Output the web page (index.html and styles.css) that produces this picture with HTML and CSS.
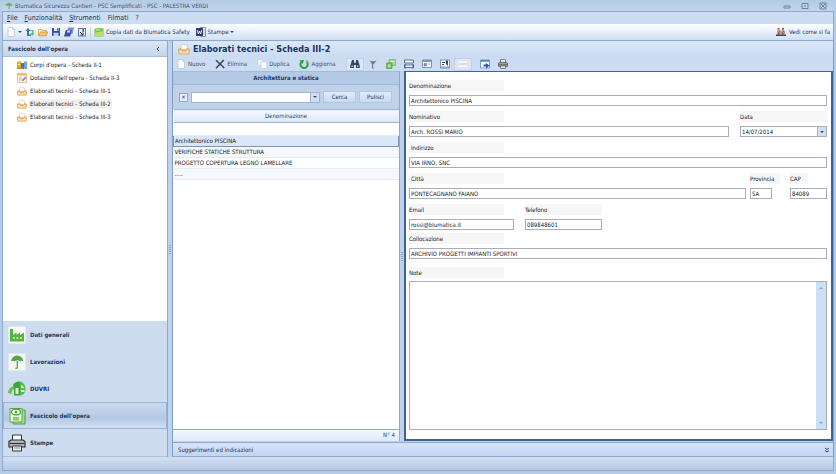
FILE: index.html
```
<!DOCTYPE html>
<html lang="it">

<head>
    <meta charset="UTF-8">
    <title>Blumatica Sicurezza Cantieri</title>
    <link rel="stylesheet" href="styles.css">
</head>

<body>

    <svg class="sprite">
        <symbol id="i-doc" viewBox="0 0 10 10"><path d="M2 .5h4.500l2 2V9.500H2z" fill="#fff" stroke="#b9c6d8" stroke-width=".8"/><path d="M6.500.5v2h2" fill="none" stroke="#b9c6d8" stroke-width=".8"/></symbol>
        <symbol id="i-sync" viewBox="0 0 10 10"><path d="M.5 4L3 1l2.500 3H4v3.500h2V9H2V4z" fill="#2f7f8c"/><path d="M5 6l2.500 3L9.500 6H8.500V3H5v1h2v2z" fill="#63b3a0"/></symbol>
        <symbol id="i-folder" viewBox="0 0 10 10"><path d="M.5 8.500v-6h3l1 1h4v1.500" fill="#fff0c8" stroke="#dd9a3c" stroke-width=".8"/><path d="M.5 8.800L2.500 5h7.300L8 8.800z" fill="#fbc86c" stroke="#dd8f2c" stroke-width=".8"/></symbol>
        <symbol id="i-save" viewBox="0 0 10 10"><path d="M1 1h8v8H1z" fill="#3b4ea8"/><path d="M3 1h4.500v3H3z" fill="#e6ebfa"/><path d="M2.500 5.800h5V9h-5z" fill="#c3cdec"/><path d="M6 1.500h1v2H6z" fill="#3b4ea8"/></symbol>
        <symbol id="i-saveall" viewBox="0 0 10 10"><path d="M4 .5h6L8.500 7h-6z" fill="#7d8fd2"/><path d="M1.800 3h6L6.200 9.500H0z" fill="#3b4ea8"/><path d="M3.500 3.500h2.800L5.800 5.500H3z" fill="#dfe6fa"/></symbol>
        <symbol id="i-saveas" viewBox="0 0 10 10"><path d="M1 1h8v8.500H1z" fill="#6a759c"/><path d="M2 2h6v6.500H2z" fill="#e8edf6"/><path d="M5.500 2h1.500v3H5.500z" fill="#4a5580"/><path d="M3 5l3 3M6 5.500V8H3.500" stroke="#26315e" fill="none"/></symbol>
        <symbol id="i-pack" viewBox="0 0 10 10"><path d="M.5 2l3.500-1 5.500.6V9.500h-9z" fill="#7cc142"/><path d="M1.500 5.500l8-1.500v5.500h-9z" fill="#b4e070"/><path d="M2 2.500h4v1H2z" fill="#dff3b8"/></symbol>
        <symbol id="i-word" viewBox="0 0 10 10"><path d="M4.500.5h5v9h-5z" fill="#fff" stroke="#66749b" stroke-width=".8"/><path d="M6.500 3H9M6.500 5H9M6.500 7H9" stroke="#8b97b8" stroke-width=".8"/><path d="M0 1h7v8H0z" fill="#2e3a78"/><path d="M1.200 3l1.200 4L3.500 4l1.100 3L5.800 3" fill="none" stroke="#fff" stroke-width=".9"/></symbol>
        <symbol id="i-help" viewBox="0 0 10 10"><path d="M1.500 1h2v1.800h-2zM6 1h2v1.800H6z" fill="#c0503e"/><path d="M1.500 3.500h3v4h-3zM5.500 3.500h3v4h-3z" fill="#8b4a42"/><path d="M0 7.500h10V9H0z" fill="#3f4152"/><path d="M2.500 4l1 2.500M6.500 4l1 2.500" stroke="#e9ded8" stroke-width=".7"/></symbol>
        <symbol id="i-works" viewBox="0 0 10 10"><path d="M0 2l2.500-1L4 2v7H0z" fill="#f3a825"/><path d="M4 3h3v6H4z" fill="#3b73b9"/><path d="M7 1.500h3V9H7z" fill="#6aa8dc"/><path d="M1 4h2v1H1z" fill="#fff0bf"/><path d="M0 7.500h6V9H0z" fill="#d9821a"/></symbol>
        <symbol id="i-equip" viewBox="0 0 10 10"><path d="M.5.5h9v9h-9z" fill="#f8f4ea" stroke="#e6b276" stroke-width=".8"/><path d="M.5.5h9v2h-9z" fill="#f2b56b"/><path d="M2 5h2M2 7h1.500" stroke="#d98a3a"/><path d="M4.500 7L8.500 3.500l1 1.500-3.500 3.500z" fill="#6a9ad0"/></symbol>
        <symbol id="i-tray" viewBox="0 0 12 12"><path d="M2.500 6l1.500-5 5.500 1.500L9 7z" fill="#fff" stroke="#c9c2b4" stroke-width=".7"/><path d="M.5 6l2.500-1.500v2h5.800V4.500L11.500 6 11 11H1z" fill="#f3b163"/><path d="M.5 6.200h3l1 1.800h3l1-1.800h3L11 11H1z" fill="#fbdcae" stroke="#cf9450" stroke-width=".7"/></symbol>
        <symbol id="i-cross" viewBox="0 0 10 10"><path d="M1 1.200L9.300 9M8.800 1L1 9.200" stroke="#3a4657" stroke-width="1.500" fill="none"/></symbol>
        <symbol id="i-copy" viewBox="0 0 10 10"><path d="M.5.5h5v6h-5z" fill="#f1f4fa" stroke="#c3cfdf" stroke-width=".7"/><path d="M4 3h5.500v6.500H4z" fill="#fff" stroke="#c3cfdf" stroke-width=".7"/></symbol>
        <symbol id="i-refresh" viewBox="0 0 10 10"><path d="M2 3.500a3.600 3.600 0 1 0 6.200.2" fill="none" stroke="#31a03c" stroke-width="2"/><path d="M.5 1.500L5 1 3.500 5z" fill="#2c9537"/><path d="M6.500 3.800L10 3.500 8 .8z" fill="#56bd56"/></symbol>
        <symbol id="i-find" viewBox="0 0 10 10"><path d="M2 1h2v2l.6 1h.8L6 3V1h2l1.800 6v2H6V6H4v3H.2V7z" fill="#33486e"/><path d="M1.500 6.500h1.500v1.500H1.500zM7 6.500h1.500v1.500H7z" fill="#a9bbd8"/></symbol>
        <symbol id="i-funnel" viewBox="0 0 10 10"><path d="M1.500 1.500h7L6 5v4.500H4V5z" fill="#767b83"/><path d="M2.500 1h5v1.200h-5z" fill="#d3d8df"/><path d="M5 5h.8v4H5z" fill="#dfe3e8"/></symbol>
        <symbol id="i-sheets" viewBox="0 0 10 10"><path d="M3 .5h6.500v6H3z" fill="#a5d88e" stroke="#6cb35c" stroke-width=".7"/><path d="M.5 4h5.500v5.500H.5z" fill="#6fbe55" stroke="#55a047" stroke-width=".7"/><path d="M5 2.500h3.500M2 6h2.500M2 7.800h2.500" stroke="#fff" stroke-width=".8"/></symbol>
        <symbol id="i-split" viewBox="0 0 10 10"><path d="M.5 1h9v3h-9zM.5 6h9v2.500h-9z" fill="#fff" stroke="#5c6e92"/><path d="M1 9.500V5M9 9.500V5" stroke="#46587c"/></symbol>
        <symbol id="i-card" viewBox="0 0 10 10"><path d="M.5 1h9v7.500h-9z" fill="#fff" stroke="#6b7c9d" stroke-width=".8"/><path d="M1 1h8v2H1z" fill="#8496b5"/><path d="M2 4.500h2.500V7H2zM5.500 5H8.500" fill="#7b8bab" stroke="#7b8bab" stroke-width=".7"/></symbol>
        <symbol id="i-column" viewBox="0 0 10 10"><path d="M.5 1h9v8h-9z" fill="#fff" stroke="#6b7c9d" stroke-width=".8"/><path d="M6 1.500h2V7L6 5zM2 3h3v1H2zM2 5h2v1H2z" fill="#33486e"/><path d="M1 7.500h8v1H1z" fill="#7b8bab"/></symbol>
        <symbol id="i-rows" viewBox="0 0 10 10"><path d="M.5 1.500h9v7h-9z" fill="#f5f5f6" stroke="#dcdfe6" stroke-width=".7"/><path d="M1 5h8" stroke="#c3c6d0"/></symbol>
        <symbol id="i-export" viewBox="0 0 10 10"><path d="M.5 1h9v8h-9z" fill="#fff" stroke="#5c86c8" stroke-width=".8"/><path d="M.5 1h9v1.800h-9z" fill="#5c86c8"/><path d="M3.500 5.500H6V4l3.500 2.500L6 9.500V7.500H3.500z" fill="#2854a8"/></symbol>
        <symbol id="i-print" viewBox="0 0 18 18"><path d="M4.500 1h9v6h-9z" fill="#fff" stroke="#333" stroke-width="1"/><path d="M1 7.500L3 6h12l2 1.500V13H1z" fill="#b8bcc2" stroke="#2c2c2c" stroke-width="1.200"/><path d="M2 9.500h14" stroke="#333" stroke-width="1.200"/><path d="M4.500 12h9v5h-9z" fill="#eef0f2" stroke="#333"/><path d="M6 14h6" stroke="#888"/></symbol>
        <symbol id="i-factory" viewBox="0 0 18 18"><path d="M.5.5h17v17H.5z" fill="#f6fbf4"/><path d="M2 15.500V3h3v6l3.500-2.500V9L12 6.500V9l4-2.500v9z" fill="#56b43c"/><path d="M5 11h1.800v2H5zM8.500 11h1.800v2H8.500zM12 11h1.800v2H12z" fill="#c9eab8"/></symbol>
        <symbol id="i-umbrella" viewBox="0 0 18 18"><path d="M.5.5h17v17H.5z" fill="#f2f7f0"/><path d="M3 8.500C3.500 4.500 6.500 2.500 9 2.500s6 2 6.500 6c-1-1-2.300-1-3.200 0-1-1.200-5-1.200-6 0-1-1-2.300-1-3.300 0z" fill="#55a64a"/><path d="M9.300 8v6.500q-.3 1.500-2 .5" fill="none" stroke="#55a64a" stroke-width="1.300"/></symbol>
        <symbol id="i-duvri" viewBox="0 0 18 18"><path d="M0 13C.5 8 4 5.500 8 6l-.5 3C5 9 3.500 10.500 3.500 14z" fill="#6cbc5c"/><path d="M5 5c1-2.500 4-4 7-3.500v14H6V8z" fill="#3ea537"/><path d="M12 1.500c3.500.5 5.500 4 5.500 7.500s-2 6-5.500 6.500z" fill="#5cb850"/><path d="M7.500 8h3v6h-3zM13 5l3 2v1h-3zM13 10h3.500v2H13z" fill="#d5eecd"/></symbol>
        <symbol id="i-dossier" viewBox="0 0 18 18"><path d="M5 3h12v14H5z" fill="#a9d98e" stroke="#4e9f3c"/><path d="M2 1.500h12V15H2z" fill="#e5f6da" stroke="#55ad40"/><ellipse cx="8" cy="5" rx="4.500" ry="2.800" fill="#fff" stroke="#3f9a30" stroke-width="1.200"/><circle cx="8" cy="5" r="1.300" fill="#3f9a30"/><path d="M5 10h6v3.500H5z" fill="#8bc973"/></symbol>
    </svg>

    <div class="window">
        <header class="titlebar">
            <svg class="logo" viewBox="0 0 10 10"><path d="M1 5C1 2 3 1 5 1s4 1 4 4z" fill="#6fb765"/><path d="M5 5v4" stroke="#7da07b" stroke-width="1.200"/></svg>
            <span class="title">Blumatica Sicurezza Cantieri - PSC Semplificati - PSC - PALESTRA VERDI</span>
            <div class="win-buttons">
                <button aria-label="Riduci"><svg viewBox="0 0 8 8"><path d="M1 4h6v2H1z"/></svg></button>
                <button aria-label="Ripristina"><svg viewBox="0 0 8 8"><path d="M1 1.500h6v5H1zM3 4h2"/></svg></button>
                <button aria-label="Chiudi"><svg viewBox="0 0 8 8"><path d="M1 1h6v6H1zM2 2l4 4M6 2L2 6"/></svg></button>
            </div>
        </header>

        <nav class="menubar">
            <a href="#"><u>F</u>ile</a>
            <a href="#"><u>F</u>unzionalità</a>
            <a href="#"><u>S</u>trumenti</a>
            <a href="#">Filmati</a>
            <a href="#">?</a>
        </nav>

        <div class="toolbar">
            <button aria-label="Nuovo"><svg><use href="#i-doc"/></svg><i class="caret"></i></button>
            <button aria-label="Sincronizza"><svg><use href="#i-sync"/></svg></button>
            <button aria-label="Apri"><svg><use href="#i-folder"/></svg></button>
            <button aria-label="Salva"><svg><use href="#i-save"/></svg></button>
            <button aria-label="Salva tutto"><svg><use href="#i-saveall"/></svg></button>
            <button aria-label="Salva con nome"><svg><use href="#i-saveas"/></svg></button>
            <i class="sep"></i>
            <button><svg><use href="#i-pack"/></svg>Copia dati da Blumatica Safety</button>
            <button class="print"><svg><use href="#i-word"/></svg>Stampe<i class="caret"></i></button>
            <button class="push"><svg><use href="#i-help"/></svg>Vedi come si fa</button>
        </div>

        <div class="workspace">
            <aside class="sidebar">
                <div class="side-head">Fascicolo dell'opera <button class="collapse" aria-label="Comprimi"><svg viewBox="0 0 6 6"><path d="M4 1L2 3l2 2"/></svg></button></div>
                <div class="tree">
                    <a href="#"><svg><use href="#i-works"/></svg><span>Corpi d'opera - Scheda II-1</span></a>
                    <a href="#"><svg><use href="#i-equip"/></svg><span>Dotazioni dell'opera - Scheda II-3</span></a>
                    <a href="#"><svg><use href="#i-tray"/></svg><span>Elaborati tecnici - Scheda III-1</span></a>
                    <a href="#" class="current"><svg><use href="#i-tray"/></svg><span>Elaborati tecnici - Scheda III-2</span></a>
                    <a href="#"><svg><use href="#i-tray"/></svg><span>Elaborati tecnici - Scheda III-3</span></a>
                </div>
                <nav class="sections">
                    <a href="#"><svg><use href="#i-factory"/></svg>Dati generali</a>
                    <a href="#"><svg><use href="#i-umbrella"/></svg>Lavorazioni</a>
                    <a href="#"><svg><use href="#i-duvri"/></svg>DUVRI</a>
                    <a href="#" class="active"><svg><use href="#i-dossier"/></svg>Fascicolo dell'opera</a>
                    <a href="#"><svg><use href="#i-print"/></svg>Stampe</a>
                </nav>
            </aside>
            <div class="splitter"></div>

            <main class="main">
                <h1><svg><use href="#i-tray"/></svg>Elaborati tecnici - Scheda III-2</h1>
                <div class="actions">
                    <button><svg><use href="#i-doc"/></svg>Nuovo</button>
                    <button><svg><use href="#i-cross"/></svg>Elimina</button>
                    <button><svg><use href="#i-copy"/></svg>Duplica</button>
                    <button><svg><use href="#i-refresh"/></svg>Aggiorna</button>
                    <div class="tools">
                        <button class="on" aria-label="Cerca"><svg><use href="#i-find"/></svg></button>
                        <button aria-label="Filtro"><svg><use href="#i-funnel"/></svg></button>
                        <button aria-label="Gruppi"><svg><use href="#i-sheets"/></svg></button>
                        <button aria-label="Dividi"><svg><use href="#i-split"/></svg></button>
                        <button aria-label="Scheda"><svg><use href="#i-card"/></svg></button>
                        <button aria-label="Colonne"><svg><use href="#i-column"/></svg></button>
                        <button class="on" aria-label="Righe"><svg><use href="#i-rows"/></svg></button>
                    </div>
                    <div class="tools">
                        <button aria-label="Esporta"><svg><use href="#i-export"/></svg></button>
                        <button aria-label="Stampa"><svg><use href="#i-print"/></svg></button>
                    </div>
                </div>

                <div class="content">
                    <section class="list">
                        <h2>Architettura e statica</h2>
                        <div class="search">
                            <button class="clear" aria-label="Azzera">×</button>
                            <div class="combo">
                                <input type="text" aria-label="Testo da cercare">
                                <button class="drop" aria-label="Mostra elenco"><i class="caret"></i></button>
                            </div>
                            <button class="btn">Cerca</button>
                            <button class="btn">Pulisci</button>
                        </div>
                        <div class="grid">
                            <table>
                                <thead>
                                    <tr><th>Denominazione</th></tr>
                                </thead>
                                <tbody>
                                    <tr class="filter"><td></td></tr>
                                    <tr class="selected"><td>Architettonico PISCINA</td></tr>
                                    <tr><td>VERIFICHE STATICHE STRUTTURA</td></tr>
                                    <tr><td>PROGETTO COPERTURA LEGNO LAMELLARE</td></tr>
                                    <tr><td>.....</td></tr>
                                </tbody>
                            </table>
                        </div>
                        <div class="count">N° 4</div>
                    </section>
                    <div class="splitter"></div>

                    <form class="detail">
                        <div class="row">
                            <div class="field grow"><label for="denominazione">Denominazione</label><input id="denominazione" type="text" value="Architettonico PISCINA"></div>
                        </div>
                        <div class="row">
                            <div class="field grow"><label for="nominativo">Nominativo</label><input id="nominativo" type="text" value="Arch. ROSSI MARIO"></div>
                            <div class="field date">
                                <label for="data">Data</label>
                                <div class="combo">
                                    <input id="data" type="text" value="14/07/2014">
                                    <button type="button" class="drop" aria-label="Apri calendario"><i class="caret"></i></button>
                                </div>
                            </div>
                        </div>
                        <div class="row">
                            <div class="field grow"><label for="indirizzo" class="indent">Indirizzo</label><input id="indirizzo" type="text" value="VIA IRNO, SNC"></div>
                        </div>
                        <div class="row city">
                            <div class="field grow"><label for="citta" class="indent">Città</label><input id="citta" type="text" value="PONTECAGNANO FAIANO"></div>
                            <div class="field province"><label for="provincia">Provincia</label><input id="provincia" type="text" value="SA"></div>
                            <div class="field zip"><label for="cap">CAP</label><input id="cap" type="text" value="84089"></div>
                        </div>
                        <div class="row contacts">
                            <div class="field email"><label for="email">Email</label><input id="email" type="text" value="rossi@blumatica.it"></div>
                            <div class="field phone"><label for="telefono">Telefono</label><input id="telefono" type="text" value="089848601"></div>
                        </div>
                        <div class="row place">
                            <div class="field grow"><label for="collocazione">Collocazione</label><input id="collocazione" type="text" value="ARCHIVIO PROGETTI IMPIANTI SPORTIVI"></div>
                        </div>
                        <div class="notes">
                            <label for="note">Note</label>
                            <div class="notes-box">
                                <textarea id="note"></textarea>
                                <div class="scroll"><i class="caret up"></i><i class="caret"></i></div>
                            </div>
                        </div>
                    </form>
                </div>

                <div class="hints">Suggerimenti ed indicazioni <button class="collapse" aria-label="Espandi"><svg viewBox="0 0 6 6"><path d="M1 1l2 1.500L5 1M1 3.500L3 5l2-1.500"/></svg></button></div>
            </main>
        </div>

        <footer class="statusbar"></footer>
    </div>

</body>

</html>
```
FILE: styles.css
```
* {
    box-sizing: border-box;
}

body {
    margin: 0;
    font-family: "DejaVu Sans Condensed", "DejaVu Sans", sans-serif;
    font-size: 6px;
    line-height: 10px;
    color: #16181d;
    background: #b9cfe9;
}

button {
    display: flex;
    align-items: center;
    padding: 0;
    border: 0;
    background: none;
    font: inherit;
    color: inherit;
}

a {
    color: inherit;
    text-decoration: none;
}

svg {
    width: 10px;
    height: 10px;
    flex: none;
}

.sprite {
    display: none;
}

.caret {
    border: 2px solid transparent;
    border-top-color: #3a4c6b;
    border-bottom: 0;
}

.window {
    display: flex;
    flex-direction: column;
    height: 100vh;
    padding: 0 2px 3px;
    background: #b5cce9;
}

/* title, menu and main toolbar */
.titlebar {
    display: flex;
    align-items: center;
    height: 12px;
    padding: 0 7px 0 3px;
    background: linear-gradient(#b3cae5, #c3d5ec);
    border-bottom: 1px solid #8fa9cc;
    color: #3d5170;
}

.logo {
    width: 8px;
    height: 8px;
}

.title {
    margin-left: 2px;
}

.win-buttons {
    display: flex;
    gap: 10px;
    margin-left: auto;
}

.win-buttons svg {
    display: block;
    width: 8px;
    height: 8px;
    fill: none;
    stroke: #6f81a1;
    stroke-width: 1;
}

.menubar {
    display: flex;
    align-items: center;
    gap: 7px;
    height: 12px;
    padding-left: 4px;
    background: #ccdcf1;
    border-left: 1px solid #8fa9cc;
    border-right: 1px solid #8fa9cc;
    color: #1e2f4d;
    font-size: 7px;
}

.toolbar {
    display: flex;
    align-items: center;
    gap: 3px;
    height: 17px;
    padding: 0 3px;
    background: linear-gradient(#fdfeff, #e2ecf8 60%, #cfdff2);
    border: 1px solid #8fa9cc;
    border-top: 0;
    color: #1e2f4d;
}

.toolbar button,
.actions button {
    gap: 2px;
}

.toolbar .print {
    margin-left: 3px;
}

.toolbar .push {
    gap: 3px;
    margin-left: auto;
}

.sep {
    width: 1px;
    height: 11px;
    background: #c6d3e6;
}

.workspace {
    display: flex;
    flex: 1;
    min-height: 0;
}

.splitter {
    display: flex;
    align-items: center;
    flex: 0 0 4px;
    background: #bed2ee;
}

.splitter::after {
    content: "";
    width: 2px;
    height: 9px;
    margin-left: 1px;
    background: repeating-linear-gradient(#8fa5c6 0 1px, #bed2ee 1px 2px);
}

/* left side */
.sidebar {
    display: flex;
    flex-direction: column;
    flex: 0 0 166px;
    border-left: 1px solid #8fa9cc;
    border-right: 1px solid #8fa9cc;
    background: #cddcef;
}

.side-head {
    display: flex;
    align-items: center;
    justify-content: space-between;
    height: 16px;
    padding: 0 6px 0 5px;
    background: linear-gradient(#dbe7f6, #c4d5ec);
    border-bottom: 1px solid #a9bfdd;
    color: #1c3763;
    font-weight: bold;
}

.collapse svg {
    display: block;
    width: 6px;
    height: 6px;
    fill: none;
    stroke: #2b4672;
}

.tree {
    flex: 1;
    min-height: 0;
    padding-top: 1px;
    background: #fff;
}

.tree a {
    display: flex;
    align-items: center;
    gap: 2px;
    height: 13px;
    padding-left: 14px;
}

.tree a span {
    padding: 0 1px;
}

.tree .current span {
    background: #f1f1f1;
}

.sections {
    border-bottom: 1px solid #a9bfdd;
}

.sections a {
    display: flex;
    align-items: center;
    gap: 4px;
    height: 27px;
    padding: 0 5px;
    color: #1c3763;
    font-weight: bold;
}

.sections svg {
    width: 18px;
    height: 18px;
}

.sections .active {
    border: 1px solid #9ab2d4;
    padding: 0 4px;
    background: linear-gradient(#c9daee, #b3c9e4 60%, #d0e0f2);
}

/* main area */
.main {
    display: flex;
    flex-direction: column;
    flex: 1;
    min-width: 0;
    border-left: 1px solid #7f9dc6;
    border-right: 1px solid #7f9dc6;
    background: #bed2ee;
}

h1 {
    display: flex;
    align-items: center;
    gap: 3px;
    height: 16px;
    margin: 0;
    padding-left: 5px;
    background: linear-gradient(#dce8f8, #cadbf2);
    color: #17335f;
    font-size: 9px;
}

h1 svg {
    width: 12px;
    height: 12px;
}

.actions {
    display: flex;
    align-items: center;
    gap: 10px;
    height: 14px;
    padding-left: 3px;
    background: #cbdcf3;
    color: #3c4d69;
}

.tools {
    display: flex;
}

.tools + .tools {
    margin-left: -6px;
}

.tools button {
    justify-content: center;
    width: 18px;
    height: 13px;
}

.tools .on {
    background: #dbe6f5;
    border: 1px solid #c0d0e8;
}

.content {
    display: flex;
    flex: 1;
    min-height: 0;
}

.list {
    display: flex;
    flex-direction: column;
    flex: 0 0 227px;
    min-width: 0;
    border-right: 1px solid #8fa9cc;
}

h2 {
    height: 14px;
    margin: 0;
    border-top: 1px solid #a5bbdb;
    border-bottom: 1px solid #a5bbdb;
    background: #b4c9e5;
    color: #1c3763;
    font-size: 6px;
    line-height: 12px;
    text-align: center;
}

.search {
    display: flex;
    align-items: center;
    gap: 3px;
    height: 24px;
    padding: 0 7px 0 6px;
    background: #c0d2ea;
    color: #1e2f4d;
}

.clear {
    justify-content: center;
    width: 9px;
    height: 9px;
    border: 1px solid #8fa9cc;
    background: #e6eefa;
}

.combo {
    display: flex;
    flex: 1;
    min-width: 0;
    border: 1px solid #a3b3c9;
    background: #fff;
}

.combo input {
    flex: 1;
    min-width: 0;
}

.drop {
    justify-content: center;
    width: 9px;
    border-left: 1px solid #a3b3c9;
    background: #cfe0f5;
}

.btn {
    justify-content: center;
    width: 33px;
    height: 12px;
    border: 1px solid #b3c7e2;
    background: linear-gradient(#e2ecf9, #c9daf0);
}

.grid {
    flex: 1;
    min-height: 0;
    background: #fff;
}

table {
    width: 100%;
    border-collapse: collapse;
}

th {
    height: 13px;
    padding: 0;
    border-top: 1px solid #9db4d5;
    border-bottom: 1px solid #9db4d5;
    background: linear-gradient(#f5f9ff, #dbe7f7);
    color: #2a3b5a;
    font-weight: normal;
}

td {
    height: 11px;
    padding: 0 1px;
    border-bottom: 1px solid #e6edf7;
}

tr:nth-child(odd) td {
    background: #f4f7fc;
}

tr.filter td {
    height: 13px;
    background: #fff;
}

tr.selected td {
    border: 1px solid #7e93b5;
    background: #d9e6f8;
}

.count {
    height: 12px;
    padding-right: 4px;
    border-top: 1px solid #8fa9cc;
    background: linear-gradient(#f4f8fe, #dfe9f8);
    color: #2a3b5a;
    text-align: right;
}

/* detail form */
.detail {
    display: flex;
    flex-direction: column;
    flex: 1;
    min-width: 0;
    padding: 8px 4px 9px 3px;
    border: 2px solid #3c6499;
    border-top-width: 1px;
    background: #fff;
}

.row {
    display: flex;
    gap: 11px;
    margin-bottom: 5px;
}

.row.city {
    gap: 4px;
}

.row.contacts {
    margin-bottom: 3px;
}

.row.place {
    margin-bottom: 8px;
}

.field {
    display: flex;
    flex-direction: column;
    gap: 4px;
}

.grow {
    flex: 1;
    min-width: 0;
}

.detail label {
    width: 95px;
    height: 11px;
    background: #f6f6f6;
    line-height: 11px;
}

.detail .indent {
    padding-left: 2px;
}

.detail .date,
.detail .date label {
    width: 87px;
}

.province {
    width: 36px;
}

.detail .province label {
    width: 30px;
}

.province input {
    width: 22px;
}

.zip {
    width: 37px;
}

.detail .zip label {
    width: 18px;
}

.email {
    width: 105px;
}

.detail .phone,
.detail .phone label {
    width: 77px;
}

input {
    height: 11px;
    padding: 0 1px;
    border: 1px solid #a9adb5;
    font: inherit;
    color: inherit;
}

.detail .combo {
    flex: none;
    border-color: #a9adb5;
}

.combo input {
    height: 9px;
    border: 0;
}

.notes {
    display: flex;
    flex-direction: column;
    flex: 1;
    gap: 3px;
    min-height: 0;
}

.notes-box {
    display: flex;
    flex: 1;
    border: 1px solid #a9adb5;
}

textarea {
    flex: 1;
    min-width: 0;
    padding: 1px;
    border: 0;
    resize: none;
    font: inherit;
}

.scroll {
    display: flex;
    flex-direction: column;
    align-items: center;
    justify-content: space-between;
    width: 10px;
    padding: 5px 0;
    background: #cddff5;
}

.scroll .caret {
    border-top-color: #8fa6c6;
}

.scroll .up {
    border-top: 0;
    border-bottom: 2px solid #8fa6c6;
}

.hints {
    display: flex;
    align-items: center;
    justify-content: space-between;
    height: 15px;
    margin-top: 1px;
    padding: 0 3px 0 5px;
    border-top: 1px solid #8fa9cc;
    border-bottom: 1px solid #8fa9cc;
    background: linear-gradient(#d5e3f8, #c3d6f1);
    color: #1e2f4d;
}

.statusbar {
    height: 14px;
    border: 1px solid #8fa9cc;
    border-top: 0;
    background: linear-gradient(#d2e0f1, #b5c9e1);
}
```
